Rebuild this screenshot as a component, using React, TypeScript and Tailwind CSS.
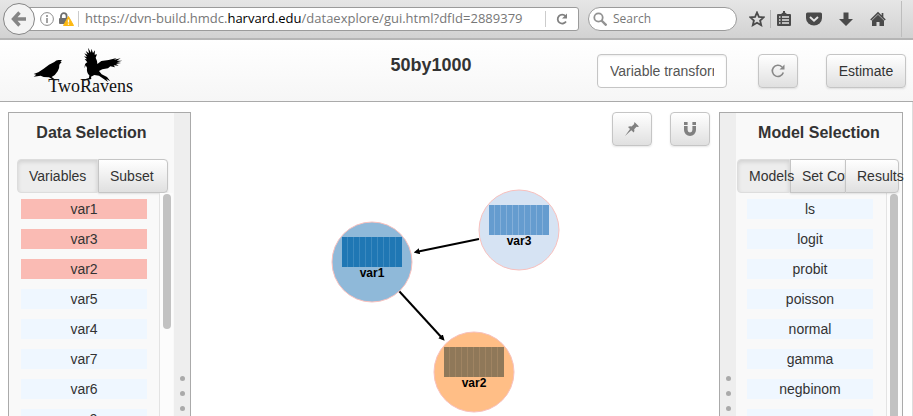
import { ReactNode } from 'react'
import clsx from 'clsx'

const variables = ['var1', 'var3', 'var2', 'var5', 'var4', 'var7', 'var6', 'var9']
const selected = new Set(['var1', 'var2', 'var3'])
const models = ['ls', 'logit', 'probit', 'poisson', 'normal', 'gamma', 'negbinom', 'exp']

const nodes = [
  { id: 'var1', x: 181, y: 160, fill: '#8fb9d9', bar: '#1f77b4', gap: '#3b89bf' },
  { id: 'var3', x: 328, y: 128, fill: '#d6e3f3', bar: '#659ccf', gap: '#84afd9' },
  { id: 'var2', x: 283, y: 270, fill: '#ffbe86', bar: '#8f7859', gap: '#a08462' },
]

const raised =
  'rounded border border-[#c5c5c5] bg-linear-to-b from-white to-[#e0e0e0] shadow-[0_1px_2px_rgba(0,0,0,0.1)]'

function Logo() {
  return (
    <svg viewBox="0 0 360 180" className="h-[60px] w-[120px]" role="img" aria-label="TwoRavens">
      <path
        fill="#000"
        d="M111 54 L103 54 Q94 53 88 60 L72 68 L56 80 L40 91 L26 96 L34 98 L26 104 L47 101 L56 105 L72 106 L82 112 L70 113 L91 115 L103 114 L88 111 L80 105 Q92 99 98 88 Q104 78 103 68 L110 60 L106 59 Z"
      />
      <path
        fill="#000"
        d="M179 79 Q178 63 187 61 L179 51 L186 52 L177 43 L186 45 L178 34 L188 38 L182 27 L192 34 L189 17 L198 32 L199 20 L204 33 L210 25 L209 38 L216 37 L212 47 L216 57 L217 66 L229 57 L251 54 L275 48 L267 53 L287 49 L275 56 L292 56 L276 61 L288 63 L273 66 L281 71 L266 70 L270 76 L256 73 L249 79 L232 82 L222 87 L230 97 L246 105 L256 118 L244 111 L249 120 L233 109 L222 101 L208 99 L198 104 L199 111 L190 113 L178 116 L168 112 L182 111 L192 108 L193 100 Q184 92 186 77 L182 70 Z"
      />
      <text x="70" y="151" fontSize="54" fill="#111" fontFamily="'Liberation Serif', serif">
        TwoRavens
      </text>
    </svg>
  )
}

function Browser() {
  return (
    <div className="flex h-10 shrink-0 items-center border-b-2 border-[#b5b5b5] bg-linear-to-b from-[#e6e6e6] to-[#d2d2d2] pr-[11px] pl-[3px] font-['Open_Sans',sans-serif] text-xs">
      <button
        aria-label="Back"
        className="z-10 flex size-8 shrink-0 items-center justify-center rounded-full border border-[#858585] bg-[#f3f3f3]"
      >
        <svg viewBox="0 0 16 16" className="size-4" fill="none" stroke="#858585" strokeWidth="3.400">
          <path d="M8.500 1.500 2.500 8l6 6.500M3 8h12" />
        </svg>
      </button>
      <div className="-ml-2 flex h-6 flex-1 items-center rounded-r-[3px] border border-[#9b9b9b] bg-white pl-3">
        <svg viewBox="0 0 14 14" className="size-[14px] shrink-0" fill="none" stroke="#8c8c8c">
          <circle cx="7" cy="7" r="6.400" />
          <path d="M7 6v5M7 3v2" strokeWidth="1.600" />
        </svg>
        <svg viewBox="0 0 16 14" className="ml-1 h-[14px] w-4 shrink-0">
          <path d="M3 7V4a2.800 2.800 0 0 1 5.600 0v3" fill="none" stroke="#6e6e6e" strokeWidth="1.800" />
          <rect x="1" y="6" width="9" height="6" rx="1" fill="#6e6e6e" />
          <path d="M10.500 4.500 15.500 13.500h-10z" fill="#fdb912" stroke="#fdb912" strokeLinejoin="round" />
          <path d="M10.500 7.500v3M10.500 11.500v1.200" stroke="#fff" strokeWidth="1.300" />
        </svg>
        <span className="mr-[6px] ml-1 h-4 w-px bg-[#ccc]" />
        <span className="flex-1 truncate text-[13px] text-[#777]">
          https://dvn-build.hmdc.<span className="text-black">harvard.edu</span>/dataexplore/gui.html?dfId=2889379
        </span>
        <span className="h-4 w-px bg-[#ccc]" />
        <button aria-label="Reload" className="flex w-8 justify-center">
          <svg viewBox="0 0 12 12" className="size-3" fill="none" stroke="#808080" strokeWidth="1.800">
            <path d="M10 8.500A4.500 4.500 0 1 1 9.500 3" />
            <path d="M11 .5v5H6z" fill="#808080" stroke="none" />
          </svg>
        </button>
      </div>
      <label className="ml-[9px] flex h-6 w-[149px] items-center rounded-full border border-[#9b9b9b] bg-white pl-1">
        <svg viewBox="0 0 14 14" className="size-[14px] shrink-0" fill="none" stroke="#929292" strokeWidth="1.800">
          <circle cx="5.500" cy="5.500" r="4.200" />
          <path d="m8.500 8.500 5 5" strokeWidth="2.400" />
        </svg>
        <input aria-label="Search" placeholder="Search" className="ml-[6px] w-28 outline-none placeholder:text-[#777]" />
      </label>
      <button aria-label="Bookmark" className="ml-3">
        <svg viewBox="0 0 16 16" className="size-4" fill="none" stroke="#4a4a4a" strokeWidth="1.800">
          <path d="m8 1.500 1.900 4.400 4.800.4-3.600 3.200 1.100 4.700L8 11.700l-4.200 2.500 1.100-4.700-3.600-3.200 4.800-.4z" />
        </svg>
      </button>
      <span className="ml-[5px] h-[18px] w-px bg-[#b5b5b5]" />
      <button aria-label="Bookmarks list" className="ml-[5px]">
        <svg viewBox="0 0 16 16" className="size-4">
          <path d="M2 3h3l2-1.500V0h2v1.500L11 3h3q1 0 1 1v10q0 1-1 1H2q-1 0-1-1V4q0-1 1-1z" fill="#4a4a4a" />
          <path d="M3 6h1.500M6 6h7M3 9h1.500M6 9h7M3 12h1.500M6 12h7" stroke="#e4e4e4" strokeWidth="1.300" />
        </svg>
      </button>
      <button aria-label="Pocket" className="ml-[14px]">
        <svg viewBox="0 0 16 16" className="size-4">
          <path d="M1.500 1.500h13q1.500 0 1.500 1.500v4a8 7.500 0 0 1-16 0V3q0-1.500 1.500-1.500z" fill="#4a4a4a" />
          <path d="m4 6 4 3.700L12 6" fill="none" stroke="#e4e4e4" strokeWidth="2" />
        </svg>
      </button>
      <button aria-label="Downloads" className="ml-4">
        <svg viewBox="0 0 16 16" className="size-4" fill="#4a4a4a">
          <path d="M5.500 1.500h5V8H15l-7 7-7-7h4.500z" />
        </svg>
      </button>
      <button aria-label="Home" className="ml-4">
        <svg viewBox="0 0 16 16" className="size-4" fill="#4a4a4a">
          <path d="M8 3.800 14 9.500V15H9.500v-4h-3v4H2V9.500z" />
          <path d="m.8 9 7.200-7 7.200 7M12.500 2v4" fill="none" stroke="#4a4a4a" strokeWidth="1.700" />
        </svg>
      </button>
      <span className="ml-[15px] h-9 w-px bg-[#bdbdbd]" />
    </div>
  )
}

function Header() {
  return (
    <header className="flex h-[62px] shrink-0 border-b border-[#aaa] bg-linear-to-b from-white to-[#f6f6f6] pr-[7px]">
      <div className="w-[265px] shrink-0 pt-[2px] pl-[25px]">
        <Logo />
      </div>
      <h1 className="flex-1 pt-[13px] text-center text-lg leading-6 font-bold">50by1000</h1>
      <div className="flex items-start pt-[14px]">
        <input
          aria-label="Variable transformation"
          defaultValue="Variable transformation"
          className="h-[34px] w-[130px] rounded border border-[#c5c5c5] bg-white px-3 text-[#555] shadow-[inset_0_1px_2px_rgba(0,0,0,0.08)]"
        />
        <button aria-label="Reset" className={clsx(raised, 'ml-[31px] flex h-[34px] w-10 items-center justify-center')}>
          <svg viewBox="0 0 14 14" className="size-[14px]" fill="none" stroke="#888" strokeWidth="1.600">
            <path d="M12.300 8.500A5.600 5.600 0 1 1 11 3" />
            <path d="M13.500.5v5h-5z" fill="#888" stroke="none" />
          </svg>
        </button>
        <button className={clsx(raised, 'ml-7 h-[34px] w-20')}>Estimate</button>
      </div>
    </header>
  )
}

function Handle() {
  return (
    <div className="flex w-4 shrink-0 flex-col items-center gap-[10px] bg-[#eee] pt-[263px]">
      <span className="size-[5px] rounded-full bg-[#aaa]" />
      <span className="size-[5px] rounded-full bg-[#aaa]" />
      <span className="size-[5px] rounded-full bg-[#aaa]" />
    </div>
  )
}

function Tab({ active, className, children }: { active?: boolean; className: string; children: ReactNode }) {
  return (
    <button
      className={clsx(
        'h-[34px] border pl-[11px] text-left whitespace-nowrap',
        active
          ? 'relative z-10 rounded-l border-[#ddd] bg-[#ededed] shadow-[inset_0_2px_4px_rgba(0,0,0,0.12)]'
          : 'border-[#c5c5c5] bg-linear-to-b from-white to-[#e0e0e0] shadow-[0_1px_2px_rgba(0,0,0,0.1)]',
        className,
      )}
    >
      {children}
    </button>
  )
}

function List({ items, className, long }: { items: string[]; className: string; long?: boolean }) {
  return (
    <div className={clsx('flex min-h-0 flex-1 overflow-hidden', className)}>
      <ul className="flex flex-1 flex-col gap-[10px] pt-[6px]">
        {items.map((item) => (
          <li
            key={item}
            className={clsx(
              'h-5 w-[126px] shrink-0 text-center leading-5',
              selected.has(item) ? 'bg-[#fabbb4]' : 'bg-[#eff7ff]',
            )}
          >
            {item}
          </li>
        ))}
      </ul>
      <div className="w-[14px] shrink-0 border-l border-[#e3e3e3] bg-[#fcfcfc] pt-px pl-[3px]">
        <div className={clsx('w-2 rounded-full bg-[#c2c2c2]', long ? 'h-[400px]' : 'h-[135px]')} />
      </div>
    </div>
  )
}

function Graph() {
  return (
    <section className="relative min-w-0 flex-1">
      <svg className="absolute inset-0 size-full" fontFamily="'Liberation Sans', Arial, sans-serif">
        <defs>
          <marker id="arrow" viewBox="0 -5 10 10" refX="6" markerWidth="3" markerHeight="3" orient="auto">
            <path d="M0-5 10 0 0 5z" />
          </marker>
        </defs>
        <g stroke="#000" strokeWidth="2">
          <path d="M288 137 225 150" markerEnd="url(#arrow)" />
          <path d="M208 189 252 237" markerEnd="url(#arrow)" />
        </g>
        {nodes.map((n) => (
          <g key={n.id} transform={`translate(${n.x} ${n.y})`}>
            <circle r="40" fill={n.fill} stroke="#f8c0bd" />
            <rect x="-30" y="-25" width="60" height="30" fill={n.bar} />
            <path
              d="M-24.500-25v30M-18.500-25v30M-12.500-25v30M-6.500-25v30M-.5-25v30M5.500-25v30M11.500-25v30M17.500-25v30M23.500-25v30"
              stroke={n.gap}
            />
            <text y="15" textAnchor="middle" fontSize="12" fontWeight="bold">
              {n.id}
            </text>
          </g>
        ))}
      </svg>
      <div className="relative flex justify-end gap-[18px] pt-[10px] pr-[9px]">
        <button aria-label="Pin" className={clsx(raised, 'flex h-[34px] w-10 items-center justify-center')}>
          <svg viewBox="0 0 14 14" className="size-[14px]" fill="#808080">
            <path d="M9.500 0 14 4.500l-1.500.5-1-.3-2.300 2.500q.7 2-.5 3.300L6.300 8.300 0 14l5-7-2-2q1.600-1.300 3.500-.5L9 2.300z" />
          </svg>
        </button>
        <button aria-label="Magnet" className={clsx(raised, 'flex h-[34px] w-10 items-center justify-center')}>
          <svg viewBox="0 0 14 14" className="size-[14px]" fill="none" stroke="#808080" strokeWidth="3.600">
            <path d="M2.800 0v3M11.200 0v3M2.800 4v4a4.200 4.200 0 0 0 8.400 0V4" />
          </svg>
        </button>
      </div>
    </section>
  )
}

export default function App() {
  return (
    <div className="flex h-screen flex-col overflow-hidden bg-white font-['Liberation_Sans',Arial,sans-serif] text-sm text-[#333]">
      <Browser />
      <Header />
      <main className="flex min-h-0 flex-1 border-r border-[#ddd] pr-[9px] pl-2">
        <aside className="mt-[10px] flex w-[183px] shrink-0 border border-b-0 border-[#aaa] bg-[#f9f9f9]">
          <div className="flex min-w-0 flex-1 flex-col">
            <h2 className="pt-[10px] text-center text-base leading-5 font-bold">Data Selection</h2>
            <div className="mt-4 flex pl-2">
              <Tab active className="w-[81px]">Variables</Tab>
              <Tab className="w-[70px] rounded-r">Subset</Tab>
            </div>
            <List items={variables} className="pr-px pl-3" />
          </div>
          <Handle />
        </aside>
        <Graph />
        <aside className="mt-[10px] flex w-[184px] shrink-0 border border-b-0 border-[#aaa] bg-[#f9f9f9]">
          <Handle />
          <div className="flex min-w-0 flex-1 flex-col">
            <h2 className="pt-[10px] text-center text-base leading-5 font-bold">Model Selection</h2>
            <div className="mt-4 flex pl-px">
              <Tab active className="w-[53px]">Models</Tab>
              <Tab className="w-[55px] border-r-0">Set Covar.</Tab>
              <Tab className="z-10 w-[54px] rounded-r">Results</Tab>
            </div>
            <List items={models} className="pr-[2px] pl-[11px]" long />
          </div>
        </aside>
      </main>
    </div>
  )
}
